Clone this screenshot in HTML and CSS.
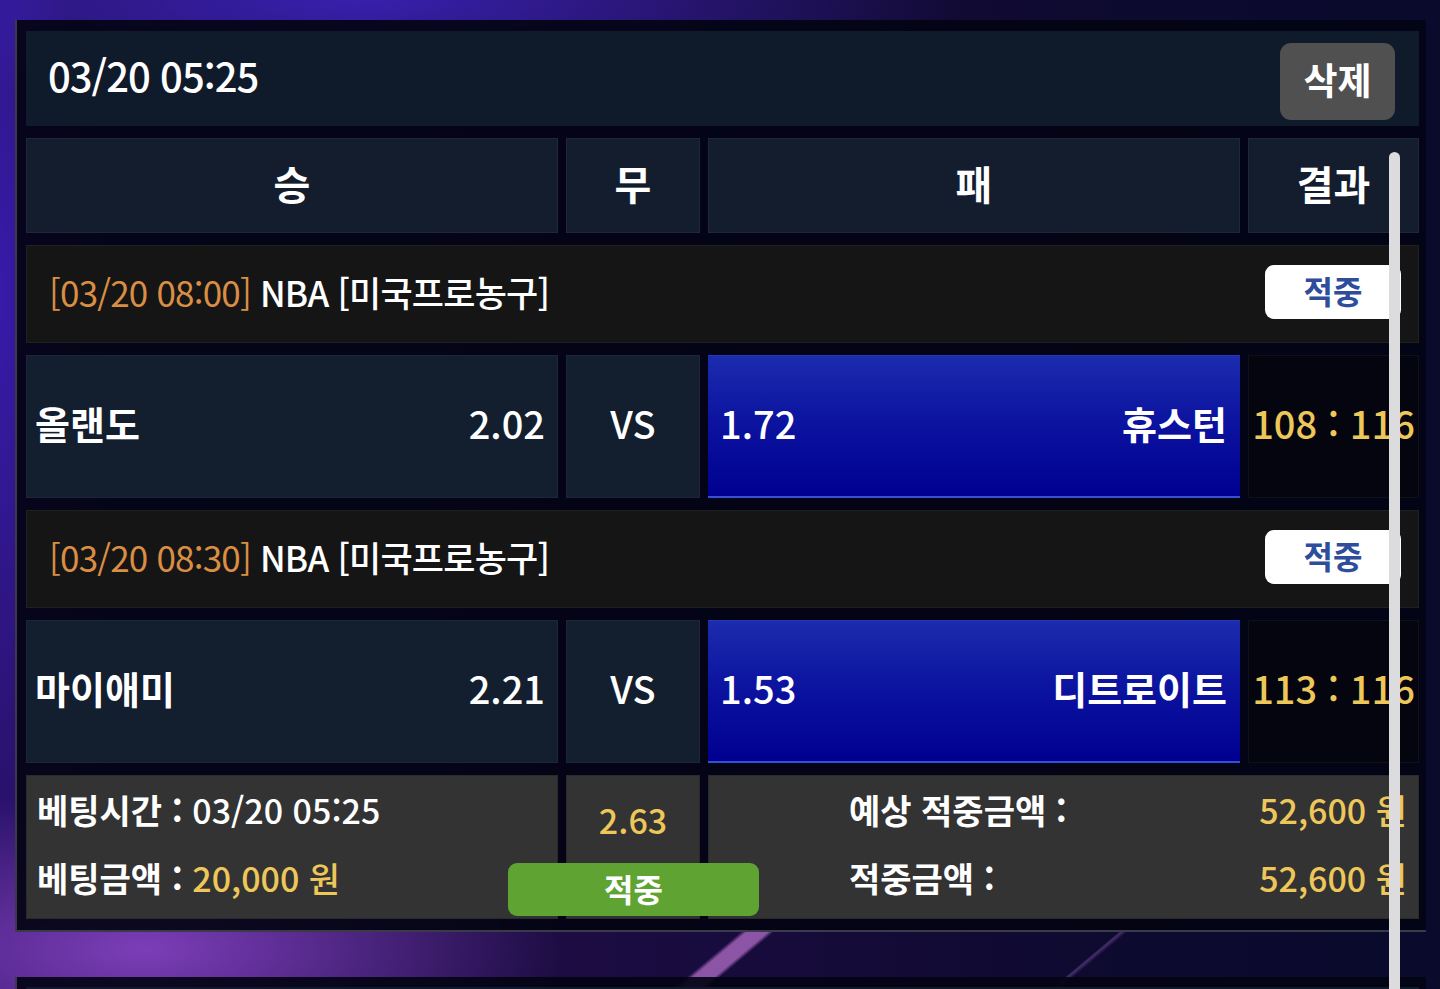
FILE: index.html
```html
<!DOCTYPE html>
<html lang="ko">
<head>
<meta charset="utf-8">
<link rel="stylesheet" href="styles.css">
</head>
<body>
<div class="page">
  <section class="card">
    <div class="card-head">
      <span class="card-date">03/20 05:25</span>
      <button class="btn-delete">삭제</button>
    </div>

    <div class="grid-row col-head">
      <div class="cell">승</div>
      <div class="cell">무</div>
      <div class="cell">패</div>
      <div class="cell">결과</div>
    </div>

    <div class="league">
      <span class="league-name"><span class="league-time">[03/20 08:00]</span> NBA [미국프로농구]</span>
      <span class="badge-hit">적중</span>
    </div>
    <div class="grid-row match">
      <div class="cell team home"><span class="name">올랜도</span><span class="odd">2.02</span></div>
      <div class="cell vs">VS</div>
      <div class="cell team away picked"><span class="odd">1.72</span><span class="name">휴스턴</span></div>
      <div class="cell result"><span>108 : 116</span></div>
    </div>

    <div class="league">
      <span class="league-name"><span class="league-time">[03/20 08:30]</span> NBA [미국프로농구]</span>
      <span class="badge-hit">적중</span>
    </div>
    <div class="grid-row match">
      <div class="cell team home"><span class="name">마이애미</span><span class="odd">2.21</span></div>
      <div class="cell vs">VS</div>
      <div class="cell team away picked"><span class="odd">1.53</span><span class="name">디트로이트</span></div>
      <div class="cell result"><span>113 : 116</span></div>
    </div>

    <div class="grid-row summary">
      <div class="cell sum-left">
        <div class="line">베팅시간 : <span class="num">03/20 05:25</span></div>
        <div class="line">베팅금액 : <span class="yellow">20,000 원</span></div>
      </div>
      <div class="cell sum-odd"><span class="yellow">2.63</span></div>
      <div class="cell sum-right">
        <div class="line"><span>예상 적중금액 :</span><span class="yellow">52,600 원</span></div>
        <div class="line"><span>적중금액 :</span><span class="yellow">52,600 원</span></div>
      </div>
      <div class="status-hit">적중</div>
    </div>
  </section>

  <section class="card next">
    <div class="card-head"></div>
  </section>
</div>
<div class="scrollbar"></div>
</body>
</html>
```

FILE: styles.css
```css
html, body {
  margin: 0;
  padding: 0;
  height: 989px;
  overflow: hidden;
}
body {
  font-family: "Noto Sans CJK KR", "Noto Sans", sans-serif;
  color: #ffffff;
  position: relative;
  background:
    linear-gradient(140deg, transparent 0 49.2%, rgba(190,115,210,0.7) 49.6%, rgba(190,115,210,0.7) 51%, transparent 51.4%) 0 930px / 1440px 59px no-repeat,
    linear-gradient(140deg, transparent 0 74.2%, rgba(160,100,200,0.4) 74.4%, transparent 74.8%) 0 930px / 1440px 59px no-repeat,
    radial-gradient(ellipse 420px 160px at 10% 96%, rgba(140,70,200,0.85), transparent 100%),
    radial-gradient(ellipse 600px 120px at 25% 0%, rgba(60,35,190,0.85), transparent 100%),
    radial-gradient(ellipse 80px 600px at 0% 30%, rgba(60,30,190,0.8), transparent 100%),
    linear-gradient(90deg, #261060 0%, #1c0c42 40%, #0e0a30 75%, #090a2c 100%);
}
.page {
  padding: 20px 14px 0 15px;
  display: flex;
  flex-direction: column;
  gap: 45px;
}
.card {
  background: rgba(3, 4, 20, 0.92);
  border-left: 2px solid #3a3a48;
  border-bottom: 2px solid #3a3a48;
  padding: 11px 7px 12px 9px;
  display: flex;
  flex-direction: column;
  gap: 12px;
}
.card.next {
  padding-top: 10px;
  height: 40px;
}
.card-head {
  background: #0f1a2b;
  height: 95px;
  flex: none;
  display: flex;
  align-items: center;
  justify-content: space-between;
  padding: 0 24px 0 22px;
  box-sizing: border-box;
}
.card-date {
  font-size: 40px;
  font-weight: 500;
  letter-spacing: -1px;
  padding-bottom: 8px;
}
.btn-delete {
  background: #505050;
  color: #fff;
  border: none;
  border-radius: 11px;
  width: 115px;
  height: 77px;
  margin-top: 6px;
  font-family: inherit;
  font-size: 37px;
  font-weight: 700;
  padding: 0 0 6px;
}
.grid-row {
  display: grid;
  grid-template-columns: 532px 134px 532px 171px;
  column-gap: 8px;
}
.cell {
  box-sizing: border-box;
  display: flex;
  align-items: center;
}
.col-head {
  height: 95px;
}
.col-head .cell {
  background: #131d2d;
  border: 1px solid #1e2839;
  justify-content: center;
  font-size: 40px;
  font-weight: 700;
  padding-bottom: 6px;
}
.league {
  height: 98px;
  background: #151515;
  border: 1px solid #202020;
  box-sizing: border-box;
  display: flex;
  align-items: center;
  justify-content: space-between;
  padding: 0 17px 0 22px;
}
.league-name {
  font-size: 35px;
  font-weight: 500;
  letter-spacing: -0.8px;
  padding-bottom: 6px;
}
.league-time {
  color: #d98e44;
  font-weight: 400;
}
.badge-hit {
  background: #ffffff;
  color: #2e4d9b;
  border-radius: 9px;
  width: 136px;
  height: 54px;
  margin-bottom: 5px;
  box-sizing: border-box;
  padding-bottom: 4px;
  display: flex;
  align-items: center;
  justify-content: center;
  font-size: 32px;
  font-weight: 700;
}
.match {
  height: 143px;
}
.match .cell {
  padding-bottom: 8px;
}
.team {
  justify-content: space-between;
  font-size: 38px;
}
.team .name {
  font-weight: 700;
}
.team .odd {
  font-weight: 500;
}
.home {
  background: #131e2e;
  border: 1px solid #1b2636;
  padding: 0 12px 0 8px;
}
.vs {
  background: #131e2e;
  border: 1px solid #1b2636;
  justify-content: center;
  font-size: 38px;
  font-weight: 500;
}
.picked {
  background: linear-gradient(180deg, #1b2cae 0%, #0c14a0 45%, #000090 100%);
  border-top: 1px solid #2536b8;
  border-bottom: 2px solid #3550d2;
  padding: 0 13px 0 12px;
}
.result {
  background: #05050f;
  border: 1px solid #101018;
  justify-content: center;
  overflow: visible;
  white-space: nowrap;
  font-size: 38px;
  font-weight: 500;
  color: #edc759;
}
.yellow {
  color: #edc759;
}
.summary {
  height: 143px;
  position: relative;
}
.summary .cell {
  background: #333333;
  border: 1px solid #2a2a2a;
  font-size: 34px;
  font-weight: 700;
}
.summary .line {
  line-height: 68px;
  white-space: nowrap;
}
.summary .yellow,
.summary .num {
  font-weight: 500;
}
.sum-left {
  flex-direction: column;
  align-items: flex-start !important;
  justify-content: center;
  padding: 0 0 6px 10px;
}
.sum-odd {
  justify-content: center;
  align-items: flex-start !important;
  padding-top: 19px;
}
.sum-right {
  grid-column: 3 / 5;
  flex-direction: column;
  align-items: stretch !important;
  justify-content: center;
  padding: 0 11px 6px 140px;
}
.sum-right .line {
  display: flex;
  justify-content: space-between;
}
.status-hit {
  position: absolute;
  left: 482px;
  top: 88px;
  width: 251px;
  height: 53px;
  box-sizing: border-box;
  padding-bottom: 4px;
  background: #5fa333;
  border-radius: 9px;
  display: flex;
  align-items: center;
  justify-content: center;
  font-size: 32px;
  font-weight: 700;
}
.scrollbar {
  position: absolute;
  left: 1389px;
  top: 152px;
  width: 11px;
  height: 860px;
  background: #dcdcdf;
  border-radius: 6px;
}
```
